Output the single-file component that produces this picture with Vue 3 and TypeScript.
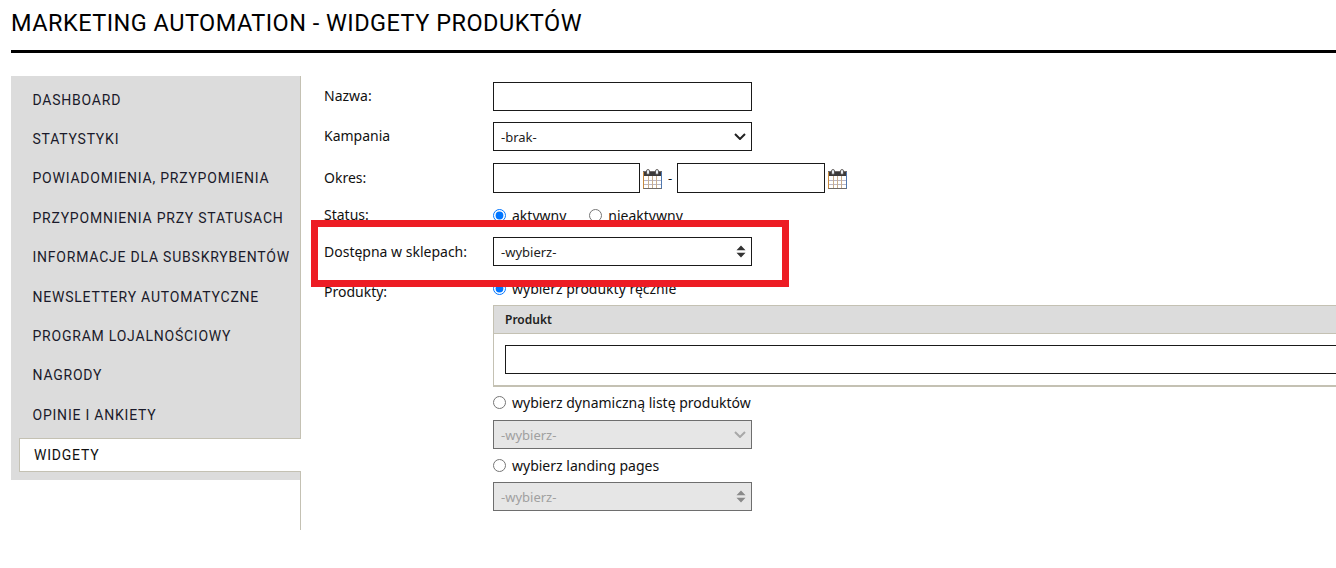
<script setup lang="ts">
const menu: string[] = [
  'DASHBOARD',
  'STATYSTYKI',
  'POWIADOMIENIA, PRZYPOMIENIA',
  'PRZYPOMNIENIA PRZY STATUSACH',
  'INFORMACJE DLA SUBSKRYBENTÓW',
  'NEWSLETTERY AUTOMATYCZNE',
  'PROGRAM LOJALNOŚCIOWY',
  'NAGRODY',
  'OPINIE I ANKIETY',
]
</script>

<template>
  <div class="page">
    <h1 class="title">MARKETING AUTOMATION - WIDGETY PRODUKTÓW</h1>
    <div class="columns">
      <nav class="side">
        <div class="side-box">
          <a v-for="m in menu" :key="m" class="item">{{ m }}</a>
          <a class="item active">WIDGETY</a>
        </div>
      </nav>
      <main class="form">
        <div class="row r-name">
          <label class="lab">Nazwa:</label>
          <input class="inp w258" type="text" />
        </div>
        <div class="row r-camp">
          <label class="lab">Kampania</label>
          <div class="inp w258 fake">
            <span>-brak-</span>
            <svg class="chev" viewBox="0 0 12 7" width="12" height="7"><path d="M1 1L6 6L11 1" fill="none" stroke="#222" stroke-width="2" /></svg>
          </div>
        </div>
        <div class="row r-period">
          <label class="lab">Okres:</label>
          <div class="dates">
            <input class="inp date" type="text" />
            <svg class="cal" viewBox="0 0 19 20" width="19" height="20">
              <rect x="0.5" y="2.5" width="18" height="17" fill="#fff" stroke="#6f6a68" />
              <path d="M0.5 3V19.5" stroke="#c98a3c" stroke-width="1" />
              <path d="M18.5 3V19.5" stroke="#4f78b0" stroke-width="1" />
              <rect x="1" y="3" width="17" height="4" fill="#3c3a3a" />
              <rect x="3.5" y="0.5" width="3" height="5" rx="1.5" fill="#e8eef4" stroke="#4a4440" stroke-width="0.8" />
              <rect x="12.5" y="0.5" width="3" height="5" rx="1.5" fill="#e8eef4" stroke="#4a4440" stroke-width="0.8" />
              <path d="M1 11.5H18M1 15.5H18" stroke="#b9b6c6" stroke-width="1" fill="none" />
              <path d="M5.5 7V19M9.5 7V19M13.5 7V19" stroke="#c9ad8c" stroke-width="1" fill="none" />
            </svg>
            <span class="dash">-</span>
            <input class="inp date second" type="text" />
            <svg class="cal" viewBox="0 0 19 20" width="19" height="20">
              <rect x="0.5" y="2.5" width="18" height="17" fill="#fff" stroke="#6f6a68" />
              <path d="M0.5 3V19.5" stroke="#c98a3c" stroke-width="1" />
              <path d="M18.5 3V19.5" stroke="#4f78b0" stroke-width="1" />
              <rect x="1" y="3" width="17" height="4" fill="#3c3a3a" />
              <rect x="3.5" y="0.5" width="3" height="5" rx="1.5" fill="#e8eef4" stroke="#4a4440" stroke-width="0.8" />
              <rect x="12.5" y="0.5" width="3" height="5" rx="1.5" fill="#e8eef4" stroke="#4a4440" stroke-width="0.8" />
              <path d="M1 11.5H18M1 15.5H18" stroke="#b9b6c6" stroke-width="1" fill="none" />
              <path d="M5.5 7V19M9.5 7V19M13.5 7V19" stroke="#c9ad8c" stroke-width="1" fill="none" />
            </svg>
          </div>
        </div>
        <div class="row r-status">
          <label class="lab">Status:</label>
          <div class="radios">
            <label class="radio"><input type="radio" name="st" checked /> aktywny</label>
            <label class="radio"><input type="radio" name="st" /> nieaktywny</label>
          </div>
        </div>
        <div class="row r-shop">
          <label class="lab">Dostępna w sklepach:</label>
          <div class="inp w258 fake">
            <span>-wybierz-</span>
            <svg class="updown" viewBox="0 0 10 13" width="10" height="13"><path d="M5 0.5L9.5 5.2H0.5ZM5 12.5L0.5 7.8H9.5Z" fill="#333" /></svg>
          </div>
        </div>
        <div class="row r-prod">
          <label class="lab">Produkty:</label>
          <div class="prod">
            <label class="radio"><input type="radio" name="pr" checked /> wybierz produkty ręcznie</label>
            <div class="table">
              <div class="thead">Produkt</div>
              <div class="tbody"><input class="inp full" type="text" /></div>
            </div>
            <label class="radio r-dyn"><input type="radio" name="pr" /> wybierz dynamiczną listę produktów</label>
            <div class="inp w258 fake dis d1">
              <span>-wybierz-</span>
              <svg class="chev" viewBox="0 0 12 7" width="12" height="7"><path d="M1 1L6 6L11 1" fill="none" stroke="#a8a8a8" stroke-width="2" /></svg>
            </div>
            <label class="radio r-land"><input type="radio" name="pr" /> wybierz landing pages</label>
            <div class="inp w258 fake dis d2">
              <span>-wybierz-</span>
              <svg class="updown" viewBox="0 0 10 13" width="10" height="13"><path d="M5 0.5L9.5 5.2H0.5ZM5 12.5L0.5 7.8H9.5Z" fill="#8a8a8a" /></svg>
            </div>
          </div>
        </div>
      </main>
    </div>
    <div class="callout"></div>
  </div>
</template>

<style>
html, body { margin: 0; background: #fff; overflow: hidden; }
</style>

<style scoped>
.page {
  position: relative;
  width: 1336px;
  height: 568px;
  overflow: hidden;
  font-family: "Noto Sans", "DejaVu Sans", sans-serif;
  font-size: 14px;
  color: #111;
  box-sizing: border-box;
  padding-left: 11px;
}
.title {
  margin: 0;
  height: 53px;
  box-sizing: border-box;
  padding-top: 8px;
  font: 400 23.5px/30px Roboto, "Liberation Sans", sans-serif;
  letter-spacing: 0.47px;
  color: #000;
  white-space: nowrap;
  border-bottom: 3px solid #000;
}
.columns { display: flex; margin-top: 23px; }
.side {
  width: 289px;
  height: 454px;
  flex: none;
  border-right: 1px solid #c4c1b3;
}
.side-box {
  background: #dcdcdc;
  height: 404px;
  padding-top: 4px;
  box-sizing: border-box;
  width: 289px;
}
.item {
  display: flex;
  align-items: center;
  height: 39.4px;
  padding-left: 21.5px;
  font: 400 14px Roboto, "Liberation Sans", sans-serif;
  letter-spacing: 0.78px;
  color: #1a1a2a;
  white-space: nowrap;
  box-sizing: border-box;
}
.item.active {
  background: #fff;
  border: 1px solid #c4c1b3;
  border-right: 0;
  margin: 3px -1px 0 8px;
  padding-left: 14px;
  height: 34px;
  color: #111;
}
.form { padding: 6px 0 0 23px; flex: 1; min-width: 0; }
.row { display: flex; align-items: flex-start; }
.lab { width: 169px; flex: none; display: block; line-height: 20px; }
.inp {
  display: block;
  box-sizing: border-box;
  height: 29px;
  border: 1px solid #1a1a1a;
  background: #fff;
  font-family: "Noto Sans", sans-serif;
  font-size: 13px;
  padding: 0 7px;
  border-radius: 0;
  margin: 0;
  outline: none;
  color: #222;
}
.w258 { width: 259px; }
.r-name .lab { padding-top: 4px; }
.r-camp { margin-top: 11px; }
.r-camp .lab { padding-top: 4px; }
.r-period { margin-top: 12px; }
.r-period .lab { padding-top: 5px; }
.dates { display: flex; align-items: center; }
.date { width: 147px; height: 30px; }
.date.second { width: 148px; }
.cal { margin: 1px 0 0 3px; flex: none; }
.dash { margin: 0 4px 0 6px; font-size: 13px; width: 5px; }
.r-status { margin-top: 11px; height: 22px; align-items: center; }
.radios { display: flex; gap: 23px; }
.radio { display: flex; align-items: center; height: 18px; white-space: nowrap; }
.radio input { width: 13px; height: 13px; margin: 0 6px 0 0; flex: none; }
.r-shop { margin-top: 11px; }
.r-shop .lab { padding-top: 5px; }
.fake { display: flex; align-items: center; justify-content: space-between; padding-right: 5px; }
.updown, .chev { flex: none; }
.r-prod { margin-top: 13px; }
.r-prod .lab { padding-top: 3px; }
.prod { flex: 1; min-width: 0; }
.table {
  margin-top: 8px;
  width: 860px;
  height: 82px;
  border: 1px solid #c4c1b3;
  border-width: 1px 1px 2px 1px;
  box-sizing: border-box;
}
.thead {
  height: 27px;
  background: #dcdcdc;
  border-bottom: 1px solid #c4c1b3;
  padding-left: 11px;
  line-height: 27px;
  font-size: 12px;
  font-weight: 600;
  color: #222;
}
.tbody { padding: 11px; }
.full { width: 100%; }
.r-dyn { margin-top: 6px; }
.r-land { margin-top: 7px; }
.dis {
  background: #e6e6e6;
  color: #a0a0a0;
  border-color: #6e6e6e;
}
.d1 { margin-top: 9px; }
.d2 { margin-top: 8px; }
.callout {
  position: absolute;
  left: 311px;
  top: 220px;
  width: 478px;
  height: 67px;
  box-sizing: border-box;
  border: 7px solid #ed1c24;
}
</style>
